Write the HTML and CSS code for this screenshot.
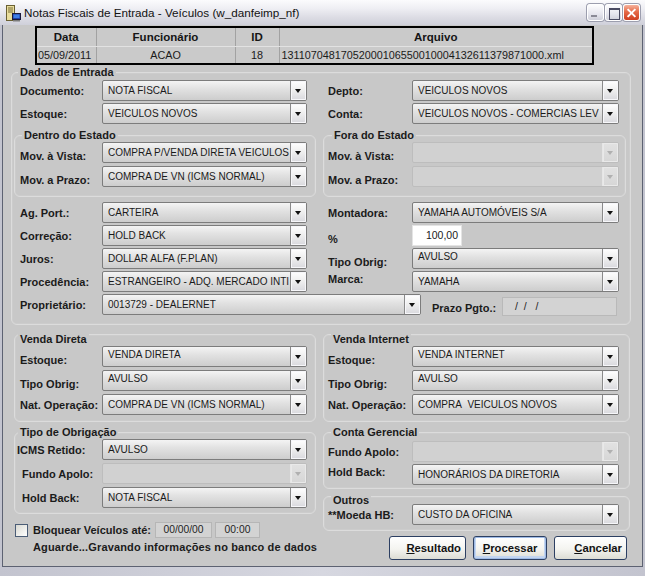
FILE: index.html
```html
<!DOCTYPE html>
<html lang="pt-BR">
<head>
<meta charset="utf-8">
<title>Notas Fiscais de Entrada - Veículos</title>
<link rel="stylesheet" href="styles.css">
</head>
<body>
<div class="window">
  <div class="titlebar">
    <svg class="app-icon" width="16" height="17" viewBox="0 0 16 17">
      <rect x="1.5" y="0.5" width="8" height="15" fill="#e9dd9c" stroke="#6a6032"/>
      <rect x="3" y="2.5" width="5" height="1" fill="#7a6e38"/>
      <rect x="3" y="4.5" width="5" height="1" fill="#7a6e38"/>
      <rect x="3" y="6.5" width="5" height="1" fill="#7a6e38"/>
      <rect x="7.5" y="8.5" width="8" height="6" fill="#1f3fa8" stroke="#1a1a3a"/>
      <rect x="8.5" y="9.5" width="6" height="3.5" fill="#3f7fe6"/>
      <rect x="8" y="15" width="7" height="1.5" fill="#7c7c7c"/>
    </svg>
    <span class="title">Notas Fiscais de Entrada - Veículos (w_danfeimp_nf)</span>
    <div class="tb-buttons">
      <span class="tb-btn tb-min"></span>
      <span class="tb-btn tb-max"></span>
      <span class="tb-btn tb-close"></span>
    </div>
  </div>

  <div class="client">
    <table class="nf-table">
      <colgroup>
        <col class="c-data"><col class="c-func"><col class="c-id"><col class="c-arq">
      </colgroup>
      <thead>
        <tr><th>Data</th><th>Funcionário</th><th>ID</th><th>Arquivo</th></tr>
      </thead>
      <tbody>
        <tr><td class="left">05/09/2011</td><td>ACAO</td><td>18</td><td class="left arq">13110704817052000106550010004132611379871000.xml</td></tr>
      </tbody>
    </table>

    <div class="group dados">
      <div class="group-title gt-dados">Dados de Entrada</div>

      <div class="pair first">
        <div class="half-l"><span class="lbl lbl-l">Documento:</span><div class="combo combo-l"><span class="combo-text">NOTA FISCAL</span><span class="combo-btn"></span></div></div>
        <div class="half-r"><span class="lbl lbl-r">Depto:</span><div class="combo combo-r"><span class="combo-text">VEICULOS NOVOS</span><span class="combo-btn"></span></div></div>
      </div>
      <div class="pair">
        <div class="half-l"><span class="lbl lbl-l">Estoque:</span><div class="combo combo-l"><span class="combo-text">VEICULOS NOVOS</span><span class="combo-btn"></span></div></div>
        <div class="half-r"><span class="lbl lbl-r">Conta:</span><div class="combo combo-r"><span class="combo-text">VEICULOS NOVOS - COMERCIAS LEV</span><span class="combo-btn"></span></div></div>
      </div>

      <div class="subgroups">
        <div class="group sub-l">
          <div class="group-title gt-in">Dentro do Estado</div>
          <div class="row in-l first-in"><span class="lbl lbl-l lbl-low">Mov. à Vista:</span><div class="combo combo-l"><span class="combo-text">COMPRA P/VENDA DIRETA VEICULOS</span><span class="combo-btn"></span></div></div>
          <div class="row in-l gap3"><span class="lbl lbl-l lbl-low">Mov. a Prazo:</span><div class="combo combo-l"><span class="combo-text">COMPRA DE VN (ICMS NORMAL)</span><span class="combo-btn"></span></div></div>
        </div>
        <div class="group sub-r">
          <div class="group-title gt-in">Fora do Estado</div>
          <div class="row in-r first-in"><span class="lbl lbl-r lbl-low">Mov. à Vista:</span><div class="combo combo-r disabled"><span class="combo-text"></span><span class="combo-btn"></span></div></div>
          <div class="row in-r gap3"><span class="lbl lbl-r lbl-low">Mov. a Prazo:</span><div class="combo combo-r disabled"><span class="combo-text"></span><span class="combo-btn"></span></div></div>
        </div>
      </div>

      <div class="pair after-sub">
        <div class="half-l"><span class="lbl lbl-l">Ag. Port.:</span><div class="combo combo-l"><span class="combo-text">CARTEIRA</span><span class="combo-btn"></span></div></div>
        <div class="half-r"><span class="lbl lbl-r">Montadora:</span><div class="combo combo-r"><span class="combo-text">YAMAHA AUTOMÓVEIS S/A</span><span class="combo-btn"></span></div></div>
      </div>
      <div class="pair">
        <div class="half-l"><span class="lbl lbl-l">Correção:</span><div class="combo combo-l"><span class="combo-text">HOLD BACK</span><span class="combo-btn"></span></div></div>
        <div class="half-r"><span class="lbl lbl-r lbl-low">%</span><div class="num-input">100,00</div></div>
      </div>
      <div class="pair">
        <div class="half-l"><span class="lbl lbl-l">Juros:</span><div class="combo combo-l"><span class="combo-text">DOLLAR ALFA (F.PLAN)</span><span class="combo-btn"></span></div></div>
        <div class="half-r"><span class="lbl lbl-r lbl-low">Tipo Obrig:</span><div class="combo combo-r"><span class="combo-text text-high">AVULSO</span><span class="combo-btn"></span></div></div>
      </div>
      <div class="pair">
        <div class="half-l"><span class="lbl lbl-l">Procedência:</span><div class="combo combo-l"><span class="combo-text">ESTRANGEIRO - ADQ. MERCADO INTI</span><span class="combo-btn"></span></div></div>
        <div class="half-r"><span class="lbl lbl-r lbl-high">Marca:</span><div class="combo combo-r"><span class="combo-text">YAMAHA</span><span class="combo-btn"></span></div></div>
      </div>
      <div class="pair owner">
        <span class="lbl lbl-l">Proprietário:</span>
        <div class="combo combo-owner"><span class="combo-text">0013729 - DEALERNET</span><span class="combo-btn"></span></div>
        <span class="lbl lbl-prazo">Prazo Pgto.:</span>
        <div class="prazo-box">/ &nbsp;/ &nbsp;&nbsp;/</div>
      </div>
    </div>

    <div class="bottom">
      <div class="col col-l">
        <div class="group venda">
          <div class="group-title gt-flush gt-low">Venda Direta</div>
          <div class="row in-l first-in"><span class="lbl lbl-l lbl-low">Estoque:</span><div class="combo combo-l"><span class="combo-text text-high">VENDA DIRETA</span><span class="combo-btn"></span></div></div>
          <div class="row in-l gap3"><span class="lbl lbl-l lbl-low">Tipo Obrig:</span><div class="combo combo-l"><span class="combo-text text-high">AVULSO</span><span class="combo-btn"></span></div></div>
          <div class="row in-l gap3"><span class="lbl lbl-l">Nat. Operação:</span><div class="combo combo-l"><span class="combo-text">COMPRA DE VN (ICMS NORMAL)</span><span class="combo-btn"></span></div></div>
        </div>

        <div class="group tipo">
          <div class="group-title gt-flush">Tipo de Obrigação</div>
          <div class="row in-l first-in"><span class="lbl lbl-l lbl-icms">ICMS Retido:</span><div class="combo combo-l"><span class="combo-text">AVULSO</span><span class="combo-btn"></span></div></div>
          <div class="row in-l gap3"><span class="lbl lbl-l lbl-ind">Fundo Apolo:</span><div class="combo combo-l disabled"><span class="combo-text"></span><span class="combo-btn"></span></div></div>
          <div class="row in-l gap3"><span class="lbl lbl-l lbl-ind">Hold Back:</span><div class="combo combo-l"><span class="combo-text">NOTA FISCAL</span><span class="combo-btn"></span></div></div>
        </div>

        <div class="check-row">
          <span class="checkbox"></span>
          <span class="lbl check-lbl">Bloquear Veículos até:</span>
          <span class="field date-field">00/00/00</span>
          <span class="field time-field">00:00</span>
        </div>
        <div class="status">Aguarde...Gravando informações no banco de dados</div>
      </div>

      <div class="col col-r">
        <div class="group venda">
          <div class="group-title gt-low">Venda Internet</div>
          <div class="row in-r first-in"><span class="lbl lbl-r lbl-low">Estoque:</span><div class="combo combo-r"><span class="combo-text text-high">VENDA INTERNET</span><span class="combo-btn"></span></div></div>
          <div class="row in-r gap3"><span class="lbl lbl-r lbl-low">Tipo Obrig:</span><div class="combo combo-r"><span class="combo-text text-high">AVULSO</span><span class="combo-btn"></span></div></div>
          <div class="row in-r gap3"><span class="lbl lbl-r">Nat. Operação:</span><div class="combo combo-r"><span class="combo-text">COMPRA&nbsp; VEICULOS NOVOS</span><span class="combo-btn"></span></div></div>
        </div>

        <div class="group conta">
          <div class="group-title">Conta Gerencial</div>
          <div class="row in-r"><span class="lbl lbl-r">Fundo Apolo:</span><div class="combo combo-r disabled"><span class="combo-text"></span><span class="combo-btn"></span></div></div>
          <div class="row in-r"><span class="lbl lbl-r lbl-high">Hold Back:</span><div class="combo combo-r"><span class="combo-text">HONORÁRIOS DA DIRETORIA</span><span class="combo-btn"></span></div></div>
        </div>

        <div class="group outros">
          <div class="group-title gt-outros">Outros</div>
          <div class="row in-r outros-row"><span class="lbl lbl-r">**Moeda HB:</span><div class="combo combo-r"><span class="combo-text">CUSTO DA OFICINA</span><span class="combo-btn"></span></div></div>
        </div>

        <div class="btn-row">
          <button class="btn btn-res"><u>R</u>esultado</button>
          <button class="btn btn-proc focused"><u>P</u>rocessar</button>
          <button class="btn btn-canc"><u>C</u>ancelar</button>
        </div>
      </div>
    </div>
  </div>
</div>
</body>
</html>
```

FILE: styles.css
```css
* { box-sizing: border-box; }

html, body {
  margin: 0;
  padding: 0;
}

body {
  width: 645px;
  height: 576px;
  overflow: hidden;
  font-family: "Liberation Sans", Arial, sans-serif;
  color: #1b1b1b;
  background: #cfd0d9;
}

.window {
  width: 645px;
  height: 576px;
  display: flex;
  flex-direction: column;
  background: linear-gradient(90deg, #c3c4cf, #d6d7e0 50%, #c3c4cf);
}

/* ---------- title bar ---------- */
.titlebar {
  height: 25px;
  flex: none;
  display: flex;
  align-items: center;
  padding: 0 5px 0 5px;
  background: linear-gradient(#fbfbfd 0%, #eeeef3 35%, #dcdce4 70%, #cfd0da 100%);
}

.app-icon {
  flex: none;
  margin-top: 1px;
}

.title {
  margin-left: 3px;
  font-size: 11.7px;
  color: #121212;
  white-space: nowrap;
}

.tb-buttons {
  margin-left: auto;
  display: flex;
  gap: 1px;
}

.tb-btn {
  position: relative;
  width: 17px;
  height: 17px;
  border-radius: 3px;
  border: 1px solid #ffffff;
  box-shadow: 0 0 0 1px #9c9eae;
  background: linear-gradient(#fdfdfe, #e6e6ee 60%, #cfd0da);
}

.tb-min::after {
  content: "";
  position: absolute;
  left: 3px;
  bottom: 3px;
  width: 6px;
  height: 2px;
  background: #8a8a96;
}

.tb-max::after {
  content: "";
  position: absolute;
  left: 3px;
  top: 3px;
  width: 9px;
  height: 9px;
  border: 1px solid #4a4b62;
  border-top-width: 2px;
}

.tb-close {
  background: linear-gradient(#f6b39d, #e56a48 45%, #cf3f20);
}

.tb-close::before,
.tb-close::after {
  content: "";
  position: absolute;
  left: 2px;
  top: 6.5px;
  width: 11px;
  height: 2px;
  background: #ffffff;
  transform: rotate(45deg);
}

.tb-close::after {
  transform: rotate(-45deg);
}

/* ---------- client ---------- */
.client {
  flex: 1;
  margin: 0 2px 9px 2px;
  border: 1px solid #5d6272;
  border-top: none;
  background: #c8c8c8;
}

/* ---------- table ---------- */
.nf-table {
  margin: 1px 0 0 32px;
  width: 559px;
  table-layout: fixed;
  border-collapse: collapse;
  border: 2px solid #000;
  background: #cacaca;
}

.c-data { width: 60px; }
.c-func { width: 139px; }
.c-id { width: 44px; }

.nf-table th,
.nf-table td {
  padding: 0;
  border: 1px solid #a2a2a2;
  text-align: center;
  white-space: nowrap;
  overflow: hidden;
}

.nf-table th {
  height: 19px;
  font-size: 11.5px;
  font-weight: bold;
  color: #151515;
  border-bottom-color: #e2e2e2;
}

.nf-table td {
  height: 18px;
  font-size: 10.8px;
  color: #1a1a1a;
}

.nf-table td.left {
  text-align: left;
  padding-left: 1px;
}

.nf-table td.arq {
  padding-left: 2px;
}

/* ---------- groups ---------- */
.group {
  border: 1px solid #dcdcdc;
  border-radius: 6px;
  box-shadow: inset 0 0 0 1px rgba(255, 255, 255, 0.08);
}

.group-title {
  display: block;
  width: fit-content;
  height: 13px;
  line-height: 13px;
  margin: -7px 0 0 7px;
  padding: 0 2px;
  background: #c8c8c8;
  font-size: 11px;
  font-weight: bold;
  color: #1b1b1b;
  white-space: nowrap;
}

.gt-dados { margin-left: 6px; }
.gt-flush { margin-left: 3px; }
.gt-low { margin-top: -2px; }
.gt-outros { margin-top: -3px; }

.dados {
  margin: 7px 0 0 8px;
  width: 620px;
  padding-bottom: 9px;
}

/* label/field pairs */
.pair {
  display: flex;
  margin-top: 2px;
  height: 21px;
}

.pair.first { margin-top: 1px; }
.pair.after-sub { margin-top: 5px; }

.half-l {
  width: 311px;
  padding-left: 8px;
  display: flex;
  align-items: center;
}

.half-r {
  padding-left: 5px;
  display: flex;
  align-items: center;
}

.pair.owner {
  align-items: center;
  padding-left: 8px;
}

.lbl {
  flex: none;
  font-size: 11px;
  font-weight: bold;
  color: #1b1b1b;
  white-space: nowrap;
}

.lbl-l { width: 82px; }
.lbl-r { width: 84px; }
.lbl-low { position: relative; top: 3px; }
.lbl-high { position: relative; top: -3px; }
.lbl-icms { margin-left: -3px; width: 85px; }
.lbl-ind { margin-left: 2px; width: 80px; }

/* combo box */
.combo {
  flex: none;
  display: flex;
  height: 21px;
  border: 1px solid #7c7c7c;
  border-radius: 2px;
  background: linear-gradient(#f4f4f4, #e2e2e2 40%, #cdcdcd);
  overflow: hidden;
}

.combo-l { width: 205px; }
.combo-r { width: 207px; }
.combo-owner { width: 319px; }

.combo-text {
  flex: 1;
  min-width: 0;
  padding-left: 5px;
  font-size: 10px;
  line-height: 19px;
  color: #1a1a1a;
  white-space: nowrap;
  overflow: hidden;
}

.combo-text.text-high { line-height: 16px; }

.combo-btn {
  position: relative;
  flex: none;
  width: 16px;
  border-left: 1px solid #8a8a8a;
  background: linear-gradient(#ffffff, #eeeeee 50%, #d9d9de);
  box-shadow: inset 0 0 0 1px #f7f7fa;
}

.combo-btn::after {
  content: "";
  position: absolute;
  left: 4px;
  top: 8px;
  border-left: 3.5px solid transparent;
  border-right: 3.5px solid transparent;
  border-top: 4px solid #111;
}

.combo.disabled {
  border-color: #bdbdbd;
  background: #d1d1d1;
}

.combo.disabled .combo-btn {
  border-left-color: #e6e6e6;
  background: linear-gradient(#e2e2e2, #d6d6d6);
  box-shadow: inset 0 0 0 1px #e9e9e9;
}

.combo.disabled .combo-btn::after {
  border-top-color: #b0b0b0;
}

/* sub groups in Dados */
.subgroups {
  display: flex;
  gap: 7px;
  margin: 11px 0 0 2px;
}

.sub-l {
  width: 302px;
  padding-bottom: 9px;
}

.sub-r {
  width: 303px;
  padding-bottom: 9px;
}

.sub-r .group-title { margin-left: 8px; }

.row {
  display: flex;
  align-items: center;
  height: 21px;
  margin-top: 2px;
}

.row.first-in { margin-top: 0; }
.row.gap3 { margin-top: 3px; }
.row.in-l { padding-left: 5px; }
.row.in-r { padding-left: 4px; }

.num-input {
  width: 50px;
  height: 21px;
  background: #ffffff;
  border: 1px solid #e4e4e4;
  font-size: 10.5px;
  line-height: 19px;
  text-align: right;
  padding-right: 3px;
  color: #1a1a1a;
}

.lbl-prazo {
  margin-left: 11px;
  width: 70px;
  position: relative;
  top: 3px;
}

.prazo-box {
  width: 115px;
  height: 19px;
  align-self: flex-end;
  margin-bottom: -1px;
  background: #d3d3d3;
  border: 1px solid #b9b9b9;
  font-size: 10.5px;
  line-height: 16px;
  padding-left: 12px;
  color: #222;
}

/* ---------- bottom area ---------- */
.bottom {
  display: flex;
  gap: 7px;
  margin: 9px 0 0 11px;
}

.col-l { width: 302px; }
.col-r { width: 307px; }

.venda {
  padding-bottom: 6px;
}

.tipo {
  margin-top: 10px;
  padding-bottom: 5px;
}

.conta {
  margin-top: 10px;
  padding-bottom: 3px;
}

.outros {
  margin-top: 7px;
  padding-bottom: 5px;
}

.outros-row { margin-top: -3px; }

.check-row {
  display: flex;
  align-items: center;
  height: 16px;
  margin-top: 8px;
  padding-left: 1px;
}

.checkbox {
  width: 13px;
  height: 13px;
  margin-right: 5px;
  border: 1px solid #4b5d76;
  background: linear-gradient(135deg, #d9d9d2, #ffffff);
}

.check-lbl {
  width: 122px;
}

.field {
  height: 16px;
  background: #d3d3d3;
  border: 1px solid #b6b6b6;
  font-size: 10.3px;
  line-height: 14px;
  text-align: center;
  color: #1f1f1f;
}

.date-field { width: 57px; }
.time-field { width: 45px; margin-left: 3px; }

.status {
  margin-top: 2px;
  padding-left: 19px;
  font-size: 11px;
  line-height: 14px;
  font-weight: bold;
  letter-spacing: 0.15px;
  white-space: nowrap;
}

.btn-row {
  display: flex;
  justify-content: flex-end;
  gap: 7px;
  margin-top: 5px;
  padding-right: 3px;
}

.btn {
  height: 24px;
  padding: 0 4px 0 0;
  border: 1px solid #2c3f62;
  border-radius: 3px;
  background: linear-gradient(#ffffff, #f4f4f0 55%, #dcdcd4);
  font-family: "Liberation Sans", Arial, sans-serif;
  font-size: 11.3px;
  font-weight: bold;
  color: #121212;
  text-align: right;
}

.btn-res { width: 77px; }
.btn-proc { width: 74px; text-align: center; padding-right: 0; }
.btn-canc { width: 73px; }

.btn.focused {
  box-shadow: inset 0 0 0 1px #9fbbe6, inset 0 -1px 0 2px #c3d5f0;
}
```
